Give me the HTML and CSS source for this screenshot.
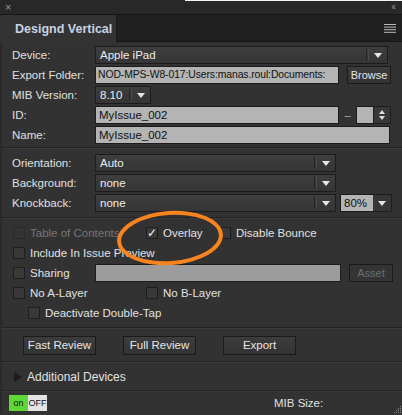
FILE: index.html
```html
<!DOCTYPE html>
<html>
<head>
<meta charset="utf-8">
<link rel="stylesheet" href="styles.css">
</head>
<body>
<div class="panel">
  <div class="titlebar">
    <span class="close">×</span>
    <span class="collapse">‹‹</span>
    <span class="topline"></span>
  </div>
  <div class="tabbar">
    <div class="tab">Designd Vertical</div>
    <div class="tabrest">
      <svg class="menu" width="12" height="9" viewBox="0 0 12 9"><g fill="#bbb"><rect x="0" y="0" width="12" height="1"/><rect x="0" y="2.6" width="12" height="1"/><rect x="0" y="5.2" width="12" height="1"/><rect x="0" y="7.8" width="12" height="1"/></g></svg>
    </div>
  </div>

  <div class="body">
    <div class="section s1">
      <div class="row">
        <span class="label">Device:</span>
        <div class="select wide"><span class="val">Apple iPad</span><span class="div"></span><span class="arrow"></span></div>
      </div>
      <div class="row">
        <span class="label">Export Folder:</span>
        <div class="input path">NOD-MPS-W8-017:Users:manas.roul:Documents:</div>
        <div class="btn small">Browse</div>
      </div>
      <div class="row">
        <span class="label">MIB Version:</span>
        <div class="select mib"><span class="val">8.10</span><span class="div"></span><span class="arrow"></span></div>
      </div>
      <div class="row">
        <span class="label">ID:</span>
        <div class="input idf">MyIssue_002</div>
        <span class="dash">–</span>
        <div class="input num"></div>
        <div class="spin"><span class="up"></span><span class="down"></span></div>
      </div>
      <div class="row">
        <span class="label">Name:</span>
        <div class="input name">MyIssue_002</div>
      </div>
    </div>

    <div class="section s2">
      <div class="row">
        <span class="label">Orientation:</span>
        <div class="select mid"><span class="val">Auto</span><span class="div"></span><span class="arrow"></span></div>
      </div>
      <div class="row">
        <span class="label">Background:</span>
        <div class="select mid"><span class="val">none</span><span class="div"></span><span class="arrow"></span></div>
      </div>
      <div class="row">
        <span class="label">Knockback:</span>
        <div class="select mid"><span class="val">none</span><span class="div"></span><span class="arrow"></span></div>
        <div class="combo"><span class="cval">80%</span><span class="carrow"><span class="arrow"></span></span></div>
      </div>
    </div>

    <div class="section s3">
      <div class="row">
        <label class="cb disabled w1"><span class="box"></span>Table of Contents</label>
        <label class="cb w2"><span class="box checked">✓</span>Overlay</label>
        <label class="cb"><span class="box"></span>Disable Bounce</label>
      </div>
      <div class="row">
        <label class="cb"><span class="box"></span>Include In Issue Preview</label>
      </div>
      <div class="row">
        <label class="cb w3"><span class="box"></span>Sharing</label>
        <div class="input share"></div>
        <div class="btn small disabled">Asset</div>
      </div>
      <div class="row">
        <label class="cb w1"><span class="box"></span>No A-Layer</label>
        <label class="cb"><span class="box"></span>No B-Layer</label>
      </div>
      <div class="row indent">
        <label class="cb"><span class="box"></span>Deactivate Double-Tap</label>
      </div>
    </div>

    <div class="section s4">
      <div class="btn big">Fast Review</div>
      <div class="btn big">Full Review</div>
      <div class="btn big">Export</div>
    </div>

    <div class="section s5">
      <span class="tri"></span>
      <span class="adl">Additional Devices</span>
    </div>

    <div class="bottombar">
      <div class="toggle"><span class="on">on</span><span class="off">OFF</span></div>
      <span class="mibsize">MIB Size:</span>
      <svg class="grip" width="8" height="8" viewBox="0 0 8 8"><g fill="#888"><rect x="7" y="1" width="1" height="1"/><rect x="5" y="3" width="1" height="1"/><rect x="7" y="3" width="1" height="1"/><rect x="3" y="5" width="1" height="1"/><rect x="5" y="5" width="1" height="1"/><rect x="7" y="5" width="1" height="1"/><rect x="1" y="7" width="1" height="1"/><rect x="3" y="7" width="1" height="1"/><rect x="5" y="7" width="1" height="1"/><rect x="7" y="7" width="1" height="1"/></g></svg>
    </div>
  </div>

  <div class="highlight"></div>
</div>
</body>
</html>
```

FILE: styles.css
```css
* { box-sizing: border-box; }
html, body { margin: 0; padding: 0; }
body {
  width: 402px;
  height: 415px;
  overflow: hidden;
  background: #2b2b2b;
  font-family: "Liberation Sans", Arial, sans-serif;
  font-size: 11.5px;
  color: #e2e2e2;
}
.panel {
  position: relative;
  width: 402px;
  height: 415px;
  background: #323232;
}
.titlebar {
  position: relative;
  height: 15px;
  background: #282828;
  border-bottom: 1px solid #161616;
}
.close {
  position: absolute;
  left: 5px;
  top: 1px;
  font-size: 11px;
  line-height: 12px;
  color: #9a9a9a;
}
.collapse {
  position: absolute;
  right: 8px;
  top: 1px;
  font-size: 10px;
  line-height: 12px;
  letter-spacing: -2px;
  color: #8a8a8a;
}
.topline {
  position: absolute;
  left: 185px;
  right: 0;
  top: 0;
  height: 1px;
  background: #f4f4f4;
}
.tabbar {
  display: flex;
  height: 27px;
}
.tab {
  width: 117px;
  background: #333333;
  color: #c9d2e2;
  font-weight: bold;
  font-size: 12.5px;
  padding-left: 15px;
  line-height: 28px;
  border-right: 1px solid #1b1b1b;
}
.tabrest {
  flex: 1;
  background: #202020;
  border-bottom: 1px solid #151515;
  display: flex;
  justify-content: flex-end;
  align-items: center;
  padding-right: 6px;
}
.menu { display: block; }
.body {
  border-left: 2px solid #2a2a2a;
}
.section {
  border-bottom: 1px solid #232323;
  box-shadow: 0 1px 0 #3a3a3a;
}
.s1 { padding: 3px 0 4px 0; height: 106px; }
.s2 { padding: 5px 0 4px 0; height: 70px; }
.s3 { padding: 5px 0 4px 0; height: 110px; }
.row {
  display: flex;
  align-items: center;
  height: 20px;
  padding-left: 10px;
}
.label {
  width: 83px;
  flex: none;
  color: #e0e0e0;
}
.select {
  position: relative;
  height: 18px;
  background: linear-gradient(#3e3e3e, #353535);
  border: 1px solid #1c1c1c;
  color: #ececec;
  display: flex;
  align-items: center;
  padding-left: 4px;
  flex: none;
}
.select .val { flex: 1; }
.select .div {
  width: 3px;
  height: 12px;
  border-left: 1px solid #242424;
  border-right: 1px solid #4a4a4a;
  margin-right: 5px;
}
.arrow {
  width: 0;
  height: 0;
  border-left: 4px solid transparent;
  border-right: 4px solid transparent;
  border-top: 5px solid #e6e6e6;
  margin-right: 5px;
}
.wide { width: 293px; }
.mib { width: 56px; }
.mid { width: 241px; }
.input {
  height: 18px;
  background: #b4b4b4;
  border: 1px solid #1c1c1c;
  color: #111;
  padding-left: 3px;
  line-height: 16px;
  white-space: nowrap;
  overflow: hidden;
  flex: none;
}
.path { width: 244px; font-size: 10.4px; letter-spacing: -0.1px; padding-left: 2px; }
.idf { width: 244px; }
.name { width: 295px; }
.num { width: 18px; }
.share { width: 246px; background: #9c9c9c; }
.dash {
  width: 17px;
  text-align: center;
  color: #9aa8bf;
  font-size: 11px;
}
.spin {
  width: 17px;
  height: 18px;
  border: 1px solid #1c1c1c;
  border-left: none;
  background: #383838;
  display: flex;
  flex-direction: column;
  align-items: center;
  justify-content: center;
  gap: 2px;
}
.spin .up {
  border-left: 3px solid transparent;
  border-right: 3px solid transparent;
  border-bottom: 4px solid #ddd;
}
.spin .down {
  border-left: 3px solid transparent;
  border-right: 3px solid transparent;
  border-top: 4px solid #ddd;
}
.btn {
  height: 18px;
  background: linear-gradient(#3c3c3c, #333);
  border: 1px solid #1a1a1a;
  color: #e6e6e6;
  display: flex;
  align-items: center;
  justify-content: center;
  flex: none;
  white-space: nowrap;
}
.btn.small { width: 44px; margin-left: 8px; font-size: 11px; }
.btn.disabled { color: #6e6e6e; background: #343434; }
.combo {
  display: flex;
  margin-left: 4px;
  height: 18px;
  border: 1px solid #1c1c1c;
}
.cval {
  width: 32px;
  background: #b4b4b4;
  color: #111;
  padding-left: 3px;
  line-height: 16px;
}
.carrow {
  width: 18px;
  background: #363636;
  display: flex;
  align-items: center;
  justify-content: center;
}
.carrow .arrow { margin-right: 0; }
.cb {
  display: flex;
  align-items: center;
  color: #e2e2e2;
  white-space: nowrap;
}
.cb .box {
  width: 12px;
  height: 12px;
  background: #393939;
  border: 1px solid #1e1e1e;
  margin-left: 1px;
  margin-right: 5px;
  display: flex;
  align-items: center;
  justify-content: center;
  font-size: 12px;
  color: #eee;
  line-height: 12px;
}
.cb.disabled { color: #767676; }
.cb.disabled .box { background: #333; border-color: #2a2a2a; }
.w1 { width: 133px; }
.w2 { width: 73px; }
.w3 { width: 83px; }
.indent { padding-left: 25px; }
.s4 {
  height: 34px;
  display: flex;
  align-items: center;
  padding-left: 21px;
  gap: 27px;
  padding-top: 1px;
}
.btn.big { width: 73px; height: 19px; }
.s5 {
  height: 29px;
  display: flex;
  align-items: center;
  padding-left: 12px;
  padding-top: 2px;
}
.tri {
  width: 0;
  height: 0;
  border-top: 5px solid transparent;
  border-bottom: 5px solid transparent;
  border-left: 8px solid #1c1c1c;
  margin-right: 5px;
}
.adl { color: #e2e2e2; font-size: 12px; }
.bottombar {
  position: relative;
  height: 23px;
  display: flex;
  align-items: center;
  padding-left: 7px;
  padding-top: 1px;
}
.toggle {
  display: flex;
  height: 16px;
  font-size: 9px;
  line-height: 16px;
}
.on {
  width: 19px;
  background: #5fd837;
  color: #111;
  text-align: center;
}
.off {
  width: 19px;
  background: #e4e4e4;
  color: #111;
  text-align: center;
}
.mibsize {
  margin-left: 227px;
  color: #e0e0e0;
}
.grip {
  position: absolute;
  right: 1px;
  bottom: 1px;
}
.highlight {
  position: absolute;
  left: 117px;
  top: 211px;
  width: 106px;
  height: 54px;
  border: 4px solid #f7841f;
  border-radius: 50%;
  transform: rotate(-4deg);
}
```
